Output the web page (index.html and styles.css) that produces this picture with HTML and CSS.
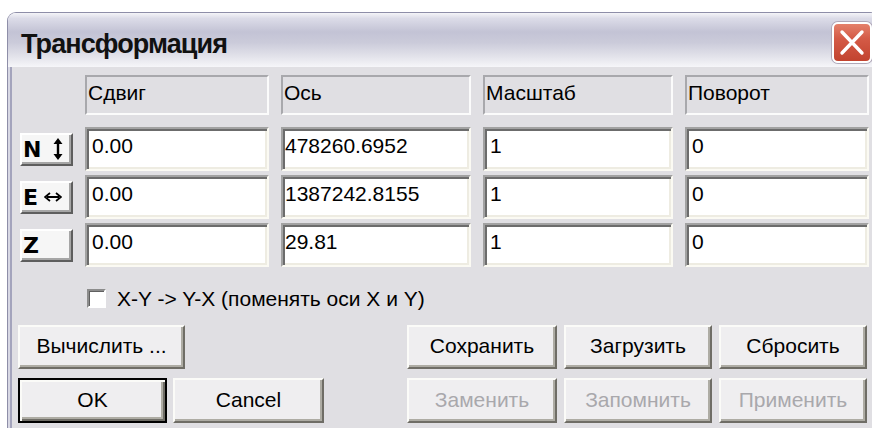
FILE: index.html
```html
<!DOCTYPE html>
<html lang="ru">
<head>
<meta charset="utf-8">
<title>Трансформация</title>
<link rel="stylesheet" href="styles.css">
</head>
<body>
<div class="window">
  <div class="titlebar">
    <span class="title">Трансформация</span>
    <button class="close" type="button" aria-label="Закрыть">
      <svg width="36" height="37" viewBox="0 0 36 37"><path d="M8 8 L28 29 M28 8 L8 29" stroke="#fff" stroke-width="3.4" stroke-linecap="round"/></svg>
    </button>
  </div>
  <div class="client">
    <div class="grid">
      <div></div>
      <div class="head">Сдвиг</div>
      <div class="head">Ось</div>
      <div class="head">Масштаб</div>
      <div class="head">Поворот</div>

      <div class="axis"><b>N</b>
        <svg class="arr-v" width="10" height="24" viewBox="0 0 10 24"><path d="M5 4 V20" stroke="#000" stroke-width="2.4"/><path d="M0.5 7 L5 1 L9.5 7 Z M0.5 17 L5 23 L9.5 17 Z" fill="#000"/></svg>
      </div>
      <div class="field">0.00</div>
      <div class="field tight">478260.6952</div>
      <div class="field">1</div>
      <div class="field">0</div>

      <div class="axis"><b>E</b>
        <svg class="arr-h" width="18" height="10" viewBox="0 0 18 10"><path d="M3 5 H15" stroke="#000" stroke-width="2"/><path d="M6 1 L1 5 L6 9 M12 1 L17 5 L12 9" fill="none" stroke="#000" stroke-width="1.8"/></svg>
      </div>
      <div class="field">0.00</div>
      <div class="field tight">1387242.8155</div>
      <div class="field">1</div>
      <div class="field">0</div>

      <div class="axis"><b>Z</b></div>
      <div class="field">0.00</div>
      <div class="field tight">29.81</div>
      <div class="field">1</div>
      <div class="field">0</div>
    </div>

    <label class="check"><span class="box"></span><span>X-Y -&gt; Y-X (поменять оси X и Y)</span></label>

    <div class="buttons">
      <div class="btnrow">
        <div class="group left">
          <button class="btn w-calc" type="button">Вычислить ...</button>
        </div>
        <div class="group right">
          <button class="btn w-150" type="button">Сохранить</button>
          <button class="btn w-148" type="button">Загрузить</button>
          <button class="btn w-148" type="button">Сбросить</button>
        </div>
      </div>
      <div class="btnrow tall">
        <div class="group left">
          <button class="btn default w-ok" type="button">OK</button>
          <button class="btn w-cancel" type="button">Cancel</button>
        </div>
        <div class="group right">
          <button class="btn w-150" type="button" disabled>Заменить</button>
          <button class="btn w-148" type="button" disabled>Запомнить</button>
          <button class="btn w-148" type="button" disabled>Применить</button>
        </div>
      </div>
    </div>
  </div>
</div>
</body>
</html>
```
FILE: styles.css
```css
html, body {
  margin: 0;
  width: 872px;
  height: 428px;
  overflow: hidden;
  background: #fff;
}

body {
  font-family: "Liberation Sans", Arial, sans-serif;
  font-size: 21px;
  color: #000;
}

/* dialog frame */
.window {
  margin: 12px 0 0 7px;
  width: 872px;
  border: 1px solid #8e8ea8;
  border-bottom: none;
  border-radius: 9px 9px 0 0;
  overflow: hidden;
  box-sizing: border-box;
}

.titlebar {
  height: 54px;
  display: flex;
  justify-content: space-between;
  align-items: flex-start;
  padding-right: 6px;
  background: linear-gradient(to bottom,
    #f4f4f8 0%,
    #dcdce8 10%,
    #c3c3d5 35%,
    #cbcbda 55%,
    #e2e2ea 80%,
    #f6f6f9 100%);
}

.title {
  padding: 16px 0 0 13px;
  font-weight: bold;
  font-size: 27px;
  letter-spacing: -0.9px;
  color: #111;
}

.close {
  margin-top: 9px;
  width: 40px;
  height: 41px;
  padding: 0;
  border: 2px solid #fff;
  border-radius: 6px;
  background: linear-gradient(to bottom, #e4806a 0%, #d45a46 40%, #c2432f 100%);
  box-shadow: 0 0 0 1px #b0a8b8;
  display: flex;
  align-items: center;
  justify-content: center;
}

.client {
  height: 361px;
  background: #e0dfe3;
  border-left: 2px solid #d8d8e4;
  box-shadow: inset 2px 0 #a4a4bc;
  padding: 8px 0 0 10px;
}

/* table of values */
.grid {
  display: grid;
  grid-template-columns: 53px 184px 190px 190px 184px;
  grid-template-rows: 48px repeat(3, 44px);
  column-gap: 12px;
  row-gap: 4px;
}

.head {
  align-self: start;
  height: 40px;
  box-sizing: border-box;
  border: 2px solid;
  border-color: #a8a8ac #fbfbfb #fbfbfb #a8a8ac;
  padding: 4px 0 0 1px;
}

.field {
  background: #fff;
  box-sizing: border-box;
  border: 2px solid;
  border-color: #a2a2a2 #fbfaf3 #fbfaf3 #a2a2a2;
  box-shadow: inset 2px 2px #6c6c6c, inset -2px -2px #eeece2;
  padding: 5px 0 0 5px;
  white-space: nowrap;
  overflow: hidden;
}

.field.tight {
  padding-left: 2px;
}

.axis {
  align-self: center;
  height: 33px;
  box-sizing: border-box;
  display: flex;
  align-items: center;
  padding-left: 1px;
  background: #f6f6f6;
  border: 2px solid;
  border-color: #fff #5e5e5e #5e5e5e #fff;
  box-shadow: inset -2px -2px #a6a6a6;
}

.axis b {
  font-weight: bold;
  font-family: "DejaVu Sans", "Liberation Sans", sans-serif;
  font-size: 22px;
}

.arr-v {
  margin-left: 12px;
}

.arr-h {
  margin-left: 6px;
}

/* swap option */
.check {
  display: flex;
  align-items: center;
  gap: 11px;
  height: 19px;
  margin: 22px 0 0 67px;
}

.box {
  width: 19px;
  height: 19px;
  box-sizing: border-box;
  background: #fff;
  border: 2px solid;
  border-color: #8c8c8c #fff #fff #8c8c8c;
  box-shadow: inset 1px 1px #606060;
}

/* command buttons */
.buttons {
  margin: 17px 0 0 -2px;
  width: 849px;
  display: flex;
  flex-direction: column;
  gap: 9px;
}

.btnrow {
  display: flex;
  justify-content: space-between;
  height: 44px;
}

.btnrow.tall {
  height: 45px;
}

.group {
  display: flex;
}

.group.left {
  gap: 6px;
}

.group.right {
  gap: 7px;
}

.btn {
  height: 100%;
  box-sizing: border-box;
  margin: 0;
  padding: 0 0 2px;
  font-family: inherit;
  font-size: 21px;
  color: #000;
  background: #efeef0;
  border: 2px solid;
  border-color: #fbfbf8 #6f6d66 #6f6d66 #fbfbf8;
  box-shadow: inset -2px -2px #aeaca4;
}

.btn.default {
  border-color: #000;
  box-shadow: inset 2px 2px #fbfbf8, inset -2px -2px #6f6d66, inset -4px -4px #aeaca4;
}

.btn:disabled {
  color: #a9a8ac;
}

.w-calc { width: 167px; }
.w-ok { width: 149px; }
.w-cancel { width: 151px; }
.w-150 { width: 150px; }
.w-148 { width: 148px; }
```
